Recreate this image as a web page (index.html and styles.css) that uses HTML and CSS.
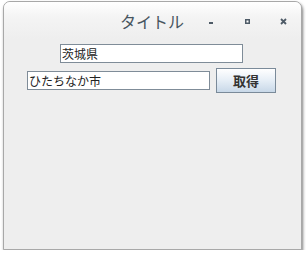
FILE: index.html
```html
<!DOCTYPE html>
<html lang="ja">
<head>
<meta charset="utf-8">
<title>タイトル</title>
<link rel="stylesheet" href="styles.css">
</head>
<body>
<div class="window">
  <div class="titlebar">
    <div class="spacer"></div>
    <div class="title">タイトル</div>
    <div class="controls">
      <span class="ctl"><svg width="16" height="16" viewBox="0 0 16 16"><rect x="6" y="9" width="4" height="2" fill="#4e5b67"/></svg></span>
      <span class="ctl"><svg width="16" height="16" viewBox="0 0 16 16"><rect x="6" y="6" width="5" height="5" fill="#4e5b67"/><rect x="7.5" y="7.5" width="2" height="2" fill="#fff"/></svg></span>
      <span class="ctl"><svg width="16" height="16" viewBox="0 0 16 16"><path d="M6 6 L11 11 M11 6 L6 11" stroke="#4e5b67" stroke-width="1.8"/></svg></span>
    </div>
  </div>
  <div class="content">
    <div class="row">
      <input class="field" type="text" value="茨城県">
    </div>
    <div class="row">
      <input class="field" type="text" value="ひたちなか市">
      <button class="btn">取得</button>
    </div>
  </div>
</div>
</body>
</html>
```

FILE: styles.css
```css
html, body {
  margin: 0;
  padding: 0;
  background: #ffffff;
}
body {
  font-family: "Noto Sans CJK JP", "Noto Sans", sans-serif;
}
.window {
  margin: 1px 0 0 3px;
  width: 297px;
  height: 247px;
  border: 1px solid #a8a8a8;
  border-radius: 7px 7px 0 0;
  background: #eeeeee;
  box-shadow: 1px 2px 3px rgba(0, 0, 0, 0.5);
  overflow: hidden;
}
.titlebar {
  height: 37px;
  display: grid;
  grid-template-columns: 1fr auto 1fr;
  align-items: center;
  background: linear-gradient(#ffffff, #f4f4f4 40%, #eeeeee);
}
.title {
  font-size: 16px;
  color: #48555f;
  line-height: 20px;
  padding-top: 1px;
  padding-right: 1px;
}
.controls {
  display: flex;
  justify-content: flex-end;
  gap: 20px;
  padding-right: 10px;
}
.ctl {
  width: 16px;
  height: 16px;
  display: block;
}
.ctl svg {
  display: block;
}
.content {
  display: flex;
  flex-direction: column;
  align-items: center;
  gap: 5px;
  padding-top: 5px;
  padding-right: 2px;
}
.row {
  display: flex;
  align-items: center;
  gap: 6px;
}
.field {
  box-sizing: border-box;
  width: 183px;
  height: 19px;
  margin: 0;
  padding: 0 1px;
  border: 1px solid #7f8c98;
  background: #ffffff;
  font-family: "Noto Sans CJK JP", sans-serif;
  font-size: 12px;
  color: #222;
  outline: none;
}
.btn {
  box-sizing: border-box;
  width: 60px;
  height: 25px;
  margin: 0;
  padding: 0;
  border: 1px solid #7a8a99;
  background: linear-gradient(#ffffff, #e6eef6 50%, #c8d8e8);
  font-family: "Noto Sans CJK JP", sans-serif;
  font-size: 13px;
  font-weight: bold;
  color: #333;
}
```
